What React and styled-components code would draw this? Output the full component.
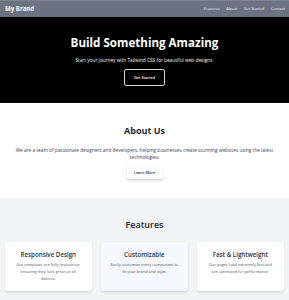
import React from "react";
import styled, { createGlobalStyle } from "styled-components";

const Global = createGlobalStyle`
  html, body { margin: 0; padding: 0; background: #ffffff; }
  body {
    font-family: "Open Sans", "Noto Sans", "Liberation Sans", sans-serif;
    -webkit-font-smoothing: antialiased;
  }
  * { box-sizing: border-box; }
`;

const Page = styled.div`
  width: 289px;
  min-height: 300px;
  display: flex;
  flex-direction: column;
`;

const NavBar = styled.nav`
  height: 17px;
  background: #6b7280;
  border-top: 1px solid #7d838f;
  display: flex;
  align-items: center;
  justify-content: space-between;
  padding: 0 4px 0 5px;
`;

const Brand = styled.div`
  color: #ffffff;
  font-weight: 700;
  font-size: 6.1px;
  line-height: 8px;
`;

const NavLinks = styled.div`
  display: flex;
  gap: 6.6px;
`;

const NavLink = styled.a`
  color: #eef0f3;
  font-size: 3.9px;
  line-height: 6px;
  text-decoration: none;
`;

const Hero = styled.section`
  background: #000000;
  padding: 20px 0 17px;
  display: flex;
  flex-direction: column;
  align-items: center;
`;

const HeroTitle = styled.h1`
  margin: 0;
  color: #ffffff;
  font-size: 11.6px;
  line-height: 12px;
  font-weight: 700;
`;

const HeroSub = styled.p`
  margin: 7.5px 0 0;
  color: #f3f4f6;
  font-size: 4.75px;
  line-height: 6.7px;
`;

const OutlineButton = styled.button`
  margin-top: 6px;
  height: 16.7px;
  width: 40.3px;
  padding: 0;
  background: transparent;
  border: 0.6px solid #d9d9d9;
  border-radius: 2.2px;
  color: #ffffff;
  font-family: inherit;
  font-size: 3.85px;
  font-weight: 600;
  line-height: 5.8px;
`;

const Section = styled.section`
  background: ${(p) => p.$bg};
  padding: ${(p) => p.$pad};
  display: flex;
  flex-direction: column;
  align-items: center;
`;

const SectionTitle = styled.h2`
  margin: 0;
  color: #1f2937;
  font-size: 9px;
  line-height: 10px;
  font-weight: ${(p) => p.$weight};
`;

const AboutText = styled.p`
  margin: 11.6px 0 0;
  padding: 0 5px;
  text-align: center;
  color: #374151;
  font-size: 4.78px;
  line-height: 6.9px;
`;

const WhiteButton = styled.button`
  margin-top: 5.3px;
  width: 36px;
  height: 12.3px;
  padding: 0;
  border: none;
  border-radius: 2px;
  background: #ffffff;
  color: #1f2937;
  font-family: inherit;
  font-size: 3.85px;
  font-weight: 600;
  line-height: 5.8px;
  box-shadow: 0 1.5px 3px rgba(0, 0, 0, 0.12), 0 0.5px 1.5px rgba(0, 0, 0, 0.08);
`;

const CardGrid = styled.div`
  margin-top: 11.7px;
  width: 100%;
  padding: 0 5.4px 0 5px;
  display: grid;
  grid-template-columns: repeat(3, 1fr);
  gap: 9.4px;
`;

const Card = styled.div`
  background: ${(p) => (p.$tint ? "#f5f8fc" : "#ffffff")};
  border-radius: 2.4px;
  padding: 8px 9px 8px;
  text-align: center;
  box-shadow: 0 1.5px 3px rgba(0, 0, 0, 0.08), 0 0.5px 1.5px rgba(0, 0, 0, 0.05);
`;

const CardTitle = styled.h3`
  margin: 0;
  color: #2d3440;
  font-size: 6.2px;
  line-height: 9.5px;
  font-weight: 600;
`;

const CardText = styled.p`
  margin: 3.3px 0 0;
  color: #4b5563;
  font-size: 3.95px;
  line-height: 6.8px;
`;

const features = [
  {
    title: "Responsive Design",
    text: "Our templates are fully responsive, ensuring they look great on all devices.",
  },
  {
    title: "Customizable",
    text: "Easily customize every component to fit your brand and style.",
    tint: true,
  },
  {
    title: "Fast & Lightweight",
    text: "Our pages load extremely fast and are optimized for performance.",
  },
];

export default function App() {
  return (
    <Page>
      <Global />
      <NavBar>
        <Brand>My Brand</Brand>
        <NavLinks>
          <NavLink href="#">Features</NavLink>
          <NavLink href="#">About</NavLink>
          <NavLink href="#">Get Started</NavLink>
          <NavLink href="#">Contact</NavLink>
        </NavLinks>
      </NavBar>
      <Hero>
        <HeroTitle>Build Something Amazing</HeroTitle>
        <HeroSub>Start your journey with Tailwind CSS for beautiful web designs.</HeroSub>
        <OutlineButton>Get Started</OutlineButton>
      </Hero>
      <Section $bg="#ffffff" $pad="23px 0 18.7px">
        <SectionTitle $weight={700}>About Us</SectionTitle>
        <AboutText>
          We are a team of passionate designers and developers, helping businesses create
          stunning websites using the latest technologies.
        </AboutText>
        <WhiteButton>Learn More</WhiteButton>
      </Section>
      <Section $bg="#f3f4f6" $pad="22.3px 0 12px">
        <SectionTitle $weight={600}>Features</SectionTitle>
        <CardGrid>
          {features.map((f) => (
            <Card key={f.title} $tint={f.tint}>
              <CardTitle>{f.title}</CardTitle>
              <CardText>{f.text}</CardText>
            </Card>
          ))}
        </CardGrid>
      </Section>
    </Page>
  );
}
